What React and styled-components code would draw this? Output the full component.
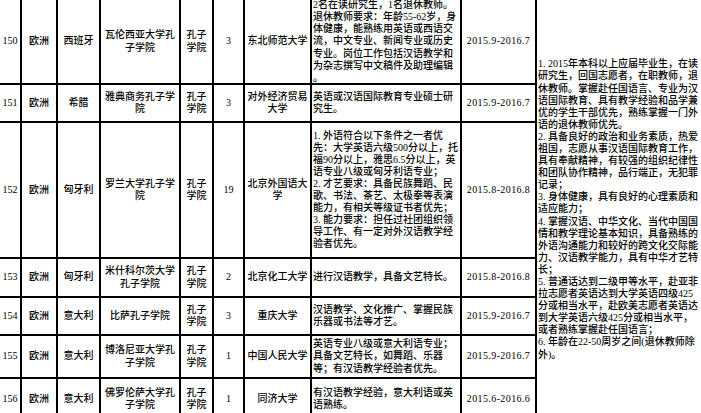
import React from 'react';
import styled, { createGlobalStyle } from 'styled-components';

const rows = [
  {
    no: '150', zhou: '欧洲', guo: '西班牙', yuan: '瓦伦西亚大学孔\n子学院', lei: '孔子\n学院', num: '3',
    school: '东北师范大学',
    req: '2名在读研究生，1名退休教师。\n退休教师要求：年龄55-62岁，身\n体健康，能熟练用英语或西语交\n流，中文专业、新闻专业或历史\n专业。岗位工作包括汉语教学和\n为杂志撰写中文稿件及助理编辑\n。',
    time: '2015.9-2016.7'
  },
  {
    no: '151', zhou: '欧洲', guo: '希腊', yuan: '雅典商务孔子学\n院', lei: '孔子\n学院', num: '3',
    school: '对外经济贸易\n大学',
    req: '英语或汉语国际教育专业硕士研\n究生。',
    time: '2015.9-2016.7'
  },
  {
    no: '152', zhou: '欧洲', guo: '匈牙利', yuan: '罗兰大学孔子学\n院', lei: '孔子\n学院', num: '19',
    school: '北京外国语大\n学',
    req: '1. 外语符合以下条件之一者优\n先：大学英语六级500分以上，托\n福90分以上，雅思6.5分以上，英\n语专业八级或匈牙利语专业；\n2. 才艺要求：具备民族舞蹈、民\n歌、书法、茶艺、太极拳等表演\n能力，有相关等级证书者优先；\n3. 能力要求：担任过社团组织领\n导工作、有一定对外汉语教学经\n验者优先。',
    time: '2015.8-2016.8'
  },
  {
    no: '153', zhou: '欧洲', guo: '匈牙利', yuan: '米什科尔茨大学\n孔子学院', lei: '孔子\n学院', num: '2',
    school: '北京化工大学',
    req: '进行汉语教学，具备文艺特长。',
    time: '2015.8-2016.8'
  },
  {
    no: '154', zhou: '欧洲', guo: '意大利', yuan: '比萨孔子学院', lei: '孔子\n学院', num: '3',
    school: '重庆大学',
    req: '汉语教学、文化推广、掌握民族\n乐器或书法等才艺。',
    time: '2015.9-2016.7'
  },
  {
    no: '155', zhou: '欧洲', guo: '意大利', yuan: '博洛尼亚大学孔\n子学院', lei: '孔子\n学院', num: '1',
    school: '中国人民大学',
    req: '英语专业八级或意大利语专业；\n具备文艺特长，如舞蹈、乐器\n等；有汉语教学经验者优先。',
    time: '2015.9-2016.7'
  },
  {
    no: '156', zhou: '欧洲', guo: '意大利', yuan: '佛罗伦萨大学孔\n子学院', lei: '孔子\n学院', num: '1',
    school: '同济大学',
    req: '有汉语教学经验，意大利语或英\n语熟练。',
    time: '2015.6-2016.6'
  }
];

const tiaojian = [
  '1. 2015年本科以上应届毕业生，在读',
  '研究生，回国志愿者，在职教师，退',
  '休教师。掌握赴任国语言、专业为汉',
  '语国际教育、具有教学经验和品学兼',
  '优的学生干部优先，熟练掌握一门外',
  '语的退休教师优先。',
  '2. 具备良好的政治和业务素质，热爱',
  '祖国，志愿从事汉语国际教育工作，',
  '具有奉献精神，有较强的组织纪律性',
  '和团队协作精神，品行端正，无犯罪',
  '记录；',
  '3. 身体健康，具有良好的心理素质和',
  '适应能力；',
  '4. 掌握汉语、中华文化、当代中国国',
  '情和教学理论基本知识，具备熟练的',
  '外语沟通能力和较好的跨文化交际能',
  '力、汉语教学能力，具有中华才艺特',
  '长；',
  '5. 普通话达到二级甲等水平，赴亚非',
  '拉志愿者英语达到大学英语四级425',
  '分或相当水平，赴欧美志愿者英语达',
  '到大学英语六级425分或相当水平，',
  '或者熟练掌握赴任国语言；',
  '6. 年龄在22-50周岁之间(退休教师除',
  '外)。'
].join('\n');

export default function App() {
  return (
    <>
      <GlobalStyle />
      <Sheet>
        <MergedCell>{tiaojian}</MergedCell>
        {rows.map(r => (
          <React.Fragment key={r.no}>
            <Cell>{r.no}</Cell>
            <Cell>{r.zhou}</Cell>
            <Cell>{r.guo}</Cell>
            <Cell>{r.yuan}</Cell>
            <Cell>{r.lei}</Cell>
            <Cell>{r.num}</Cell>
            <Cell>{r.school}</Cell>
            <Cell $left>{r.req}</Cell>
            <Cell $date>{r.time}</Cell>
          </React.Fragment>
        ))}
      </Sheet>
    </>
  );
}

const GlobalStyle = createGlobalStyle`
  html, body {
    margin: 0;
    padding: 0;
    overflow: hidden;
    background: #ffffff;
  }
`;

const Sheet = styled.div`
  display: grid;
  grid-template-columns: 20px 34px 41px 78px 31px 29px 65px 148px 73px 170px;
  grid-template-rows: 83px 36px 134px 37px 36px 41px 40px;
  gap: 2px;
  padding: 2px;
  width: max-content;
  margin: -2px 0 0 -2px;
  background: #000000;
  font-family: "Liberation Serif", "Noto Sans CJK SC", serif;
  font-size: 10px;
  font-weight: 500;
  line-height: 12.1px;
  color: #000000;
`;

const Cell = styled.div`
  background: #ffffff;
  display: flex;
  align-items: center;
  justify-content: ${({ $left }) => ($left ? 'flex-start' : 'center')};
  text-align: ${({ $left }) => ($left ? 'left' : 'center')};
  white-space: pre;
  overflow: hidden;
  padding: 0 ${({ $left }) => ($left ? '1px' : '0')};
  letter-spacing: ${({ $date }) => ($date ? '0.4px' : '0')};
`;

const MergedCell = styled.div`
  grid-column: 10;
  grid-row: 1 / span 7;
  background: #ffffff;
  display: flex;
  align-items: center;
  white-space: pre;
  overflow: hidden;
  padding: 0 1px;
`;
